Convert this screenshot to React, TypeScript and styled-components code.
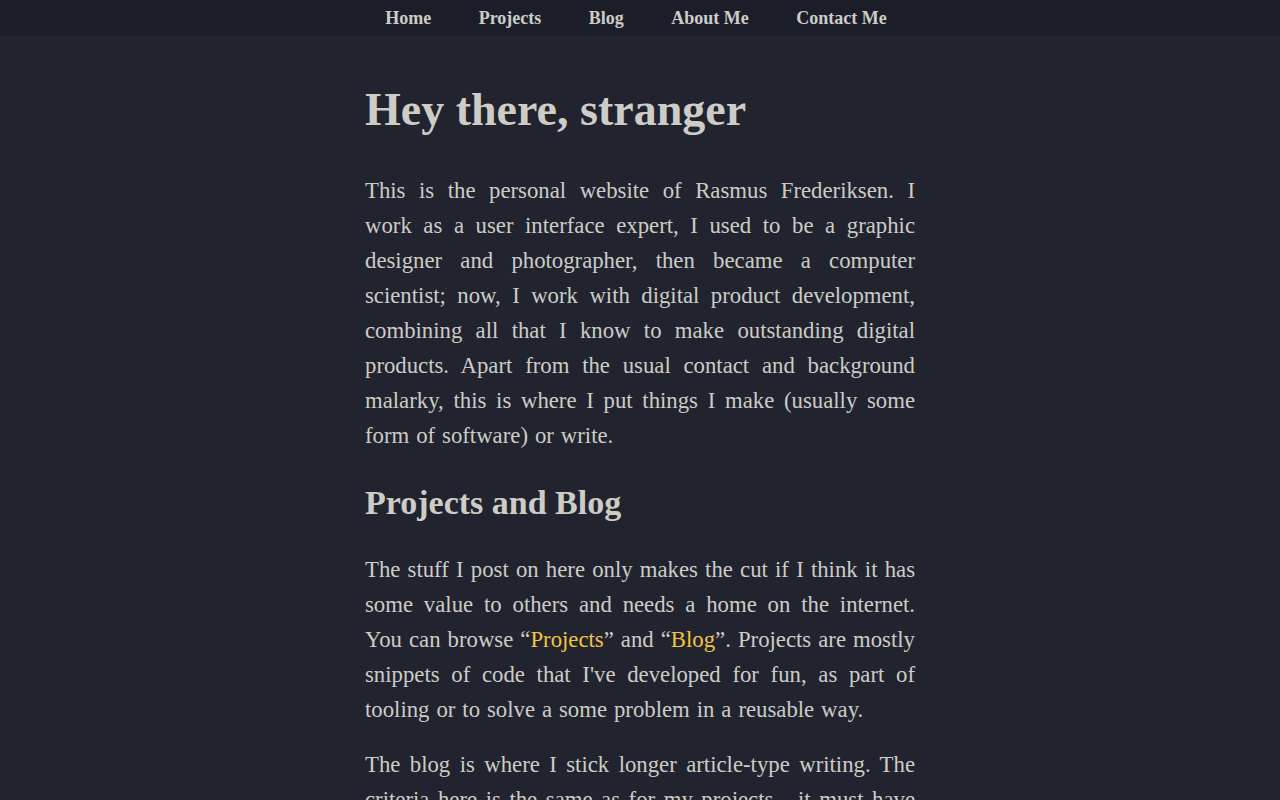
import styled, { createGlobalStyle } from 'styled-components';

const GlobalStyle = createGlobalStyle`
  html, body {
    margin: 0;
    padding: 0;
    background: #21242f;
  }
  body {
    font-family: 'Liberation Serif', 'DejaVu Serif', serif;
    color: #cdccc6;
  }
`;

const navItems = ['Home', 'Projects', 'Blog', 'About Me', 'Contact Me'];

const App = () => {
  return (
    <>
      <GlobalStyle />
      <NavBar>
        <NavList>
          {navItems.map((item) => (
            <NavLink key={item} href="#">
              {item}
            </NavLink>
          ))}
        </NavList>
      </NavBar>
      <Main>
        <Title>Hey there, stranger</Title>
        <Paragraph>
          This is the personal website of Rasmus Frederiksen. I work as a user
          interface expert, I used to be a graphic designer and photographer,
          then became a computer scientist; now, I work with digital product
          development, combining all that I know to make outstanding digital
          products. Apart from the usual contact and background malarky, this
          is where I put things I make (usually some form of software) or
          write.
        </Paragraph>
        <SubTitle>Projects and Blog</SubTitle>
        <Paragraph>
          The stuff I post on here only makes the cut if I think it has some
          value to others and needs a home on the internet. You can browse
          “<TextLink href="#">Projects</TextLink>” and “<TextLink href="#">Blog</TextLink>”.
          Projects are mostly snippets of code that I've developed for fun, as
          part of tooling or to solve a some problem in a reusable way.
        </Paragraph>
        <Paragraph>
          The blog is where I stick longer article-type writing. The criteria
          here is the same as for my projects - it must have some value to
          others, and it should be something I would want to read myself.
        </Paragraph>
      </Main>
    </>
  );
};

export default App;

const NavBar = styled.nav`
  background: #1b1e29;
  height: 36px;
  display: flex;
  justify-content: center;
`;

const NavList = styled.div`
  display: flex;
  align-items: center;
  gap: 47.5px;
  padding-right: 8px;
`;

const NavLink = styled.a`
  color: #cdccc6;
  text-decoration: none;
  font-weight: bold;
  font-size: 18px;
`;

const Main = styled.main`
  width: 550px;
  margin: 0 auto;
  padding-top: 48px;
`;

const Title = styled.h1`
  font-size: 46px;
  line-height: 52px;
  margin: 0 0 37px;
  font-weight: bold;
`;

const SubTitle = styled.h2`
  font-size: 34px;
  line-height: 40px;
  margin: 30px 0 29px;
  font-weight: bold;
`;

const Paragraph = styled.p`
  font-size: 22.75px;
  line-height: 35px;
  word-spacing: 1.26px;
  text-align: justify;
  margin: 0 0 20px;
`;

const TextLink = styled.a`
  color: #f4c542;
  text-decoration: none;
`;
